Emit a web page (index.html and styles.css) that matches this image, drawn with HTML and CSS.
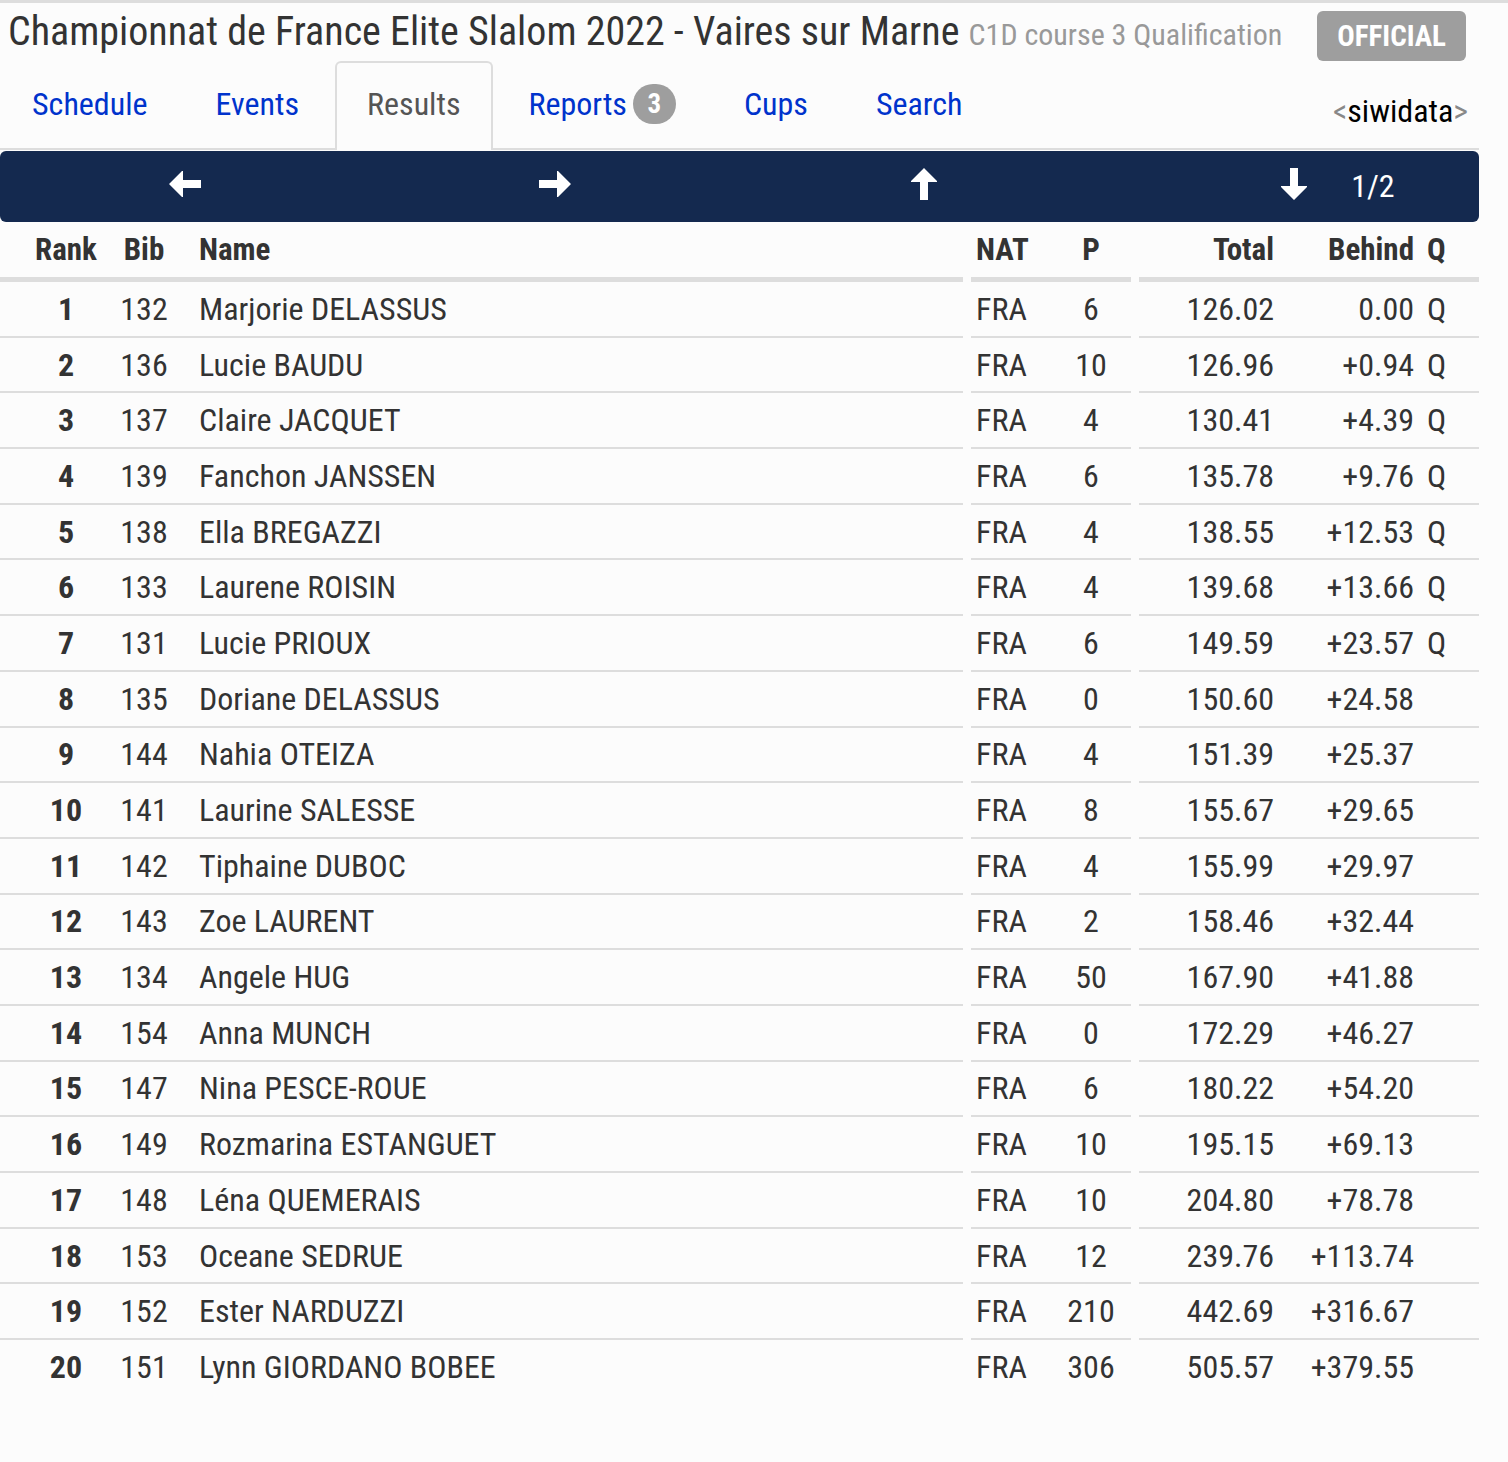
FILE: index.html
```html
<!DOCTYPE html>
<html lang="fr">
<head>
<meta charset="utf-8">
<title>Championnat de France Elite Slalom 2022 - Vaires sur Marne</title>
<link rel="stylesheet" href="styles.css">
</head>
<body>
<div class="topline"></div>
<div class="page">
  <header class="title-bar">
    <h1 class="title">Championnat de France Elite Slalom 2022 - Vaires sur Marne <small class="subtitle">C1D course 3 Qualification</small></h1>
    <span class="official">OFFICIAL</span>
  </header>

  <nav class="tabs">
    <a class="tab" href="#">Schedule</a>
    <a class="tab" href="#">Events</a>
    <a class="tab active" href="#">Results</a>
    <a class="tab" href="#">Reports <span class="count">3</span></a>
    <a class="tab" href="#">Cups</a>
    <a class="tab" href="#">Search</a>
    <span class="brand"><span class="bracket">&lt;</span>siwidata<span class="bracket">&gt;</span></span>
  </nav>

  <div class="pager">
    <span class="pager-cell"><svg class="arrow" width="32" height="26" viewBox="0 0 32 26"><polygon points="0,13 13,0 14,0 14,9 32,9 32,17 14,17 14,26 13,26" fill="#fff"/></svg></span>
    <span class="pager-cell"><svg class="arrow" width="32" height="26" viewBox="0 0 32 26"><polygon points="32,13 19,0 18,0 18,9 0,9 0,17 18,17 18,26 19,26" fill="#fff"/></svg></span>
    <span class="pager-cell"><svg class="arrow" width="26" height="32" viewBox="0 0 26 32"><polygon points="13,0 0,13 0,14 9,14 9,32 17,32 17,14 26,14 26,13" fill="#fff"/></svg></span>
    <span class="pager-cell"><svg class="arrow" width="26" height="32" viewBox="0 0 26 32"><polygon points="13,32 0,19 0,18 9,18 9,0 17,0 17,18 26,18 26,19" fill="#fff"/></svg><span class="page-no">1/2</span></span>
  </div>

  <div class="results">
    <div class="row head">
      <div class="grp g1"><span class="c-rank">Rank</span><span class="c-bib">Bib</span><span class="c-name">Name</span></div>
      <div class="grp g2"><span class="c-nat">NAT</span><span class="c-p">P</span></div>
      <div class="grp g3"><span class="c-total">Total</span><span class="c-behind">Behind</span><span class="c-q">Q</span></div>
    </div>
    <div class="row"><div class="grp g1"><span class="c-rank">1</span><span class="c-bib">132</span><span class="c-name">Marjorie DELASSUS</span></div><div class="grp g2"><span class="c-nat">FRA</span><span class="c-p">6</span></div><div class="grp g3"><span class="c-total">126.02</span><span class="c-behind">0.00</span><span class="c-q">Q</span></div></div>
    <div class="row"><div class="grp g1"><span class="c-rank">2</span><span class="c-bib">136</span><span class="c-name">Lucie BAUDU</span></div><div class="grp g2"><span class="c-nat">FRA</span><span class="c-p">10</span></div><div class="grp g3"><span class="c-total">126.96</span><span class="c-behind">+0.94</span><span class="c-q">Q</span></div></div>
    <div class="row"><div class="grp g1"><span class="c-rank">3</span><span class="c-bib">137</span><span class="c-name">Claire JACQUET</span></div><div class="grp g2"><span class="c-nat">FRA</span><span class="c-p">4</span></div><div class="grp g3"><span class="c-total">130.41</span><span class="c-behind">+4.39</span><span class="c-q">Q</span></div></div>
    <div class="row"><div class="grp g1"><span class="c-rank">4</span><span class="c-bib">139</span><span class="c-name">Fanchon JANSSEN</span></div><div class="grp g2"><span class="c-nat">FRA</span><span class="c-p">6</span></div><div class="grp g3"><span class="c-total">135.78</span><span class="c-behind">+9.76</span><span class="c-q">Q</span></div></div>
    <div class="row"><div class="grp g1"><span class="c-rank">5</span><span class="c-bib">138</span><span class="c-name">Ella BREGAZZI</span></div><div class="grp g2"><span class="c-nat">FRA</span><span class="c-p">4</span></div><div class="grp g3"><span class="c-total">138.55</span><span class="c-behind">+12.53</span><span class="c-q">Q</span></div></div>
    <div class="row"><div class="grp g1"><span class="c-rank">6</span><span class="c-bib">133</span><span class="c-name">Laurene ROISIN</span></div><div class="grp g2"><span class="c-nat">FRA</span><span class="c-p">4</span></div><div class="grp g3"><span class="c-total">139.68</span><span class="c-behind">+13.66</span><span class="c-q">Q</span></div></div>
    <div class="row"><div class="grp g1"><span class="c-rank">7</span><span class="c-bib">131</span><span class="c-name">Lucie PRIOUX</span></div><div class="grp g2"><span class="c-nat">FRA</span><span class="c-p">6</span></div><div class="grp g3"><span class="c-total">149.59</span><span class="c-behind">+23.57</span><span class="c-q">Q</span></div></div>
    <div class="row"><div class="grp g1"><span class="c-rank">8</span><span class="c-bib">135</span><span class="c-name">Doriane DELASSUS</span></div><div class="grp g2"><span class="c-nat">FRA</span><span class="c-p">0</span></div><div class="grp g3"><span class="c-total">150.60</span><span class="c-behind">+24.58</span><span class="c-q"></span></div></div>
    <div class="row"><div class="grp g1"><span class="c-rank">9</span><span class="c-bib">144</span><span class="c-name">Nahia OTEIZA</span></div><div class="grp g2"><span class="c-nat">FRA</span><span class="c-p">4</span></div><div class="grp g3"><span class="c-total">151.39</span><span class="c-behind">+25.37</span><span class="c-q"></span></div></div>
    <div class="row"><div class="grp g1"><span class="c-rank">10</span><span class="c-bib">141</span><span class="c-name">Laurine SALESSE</span></div><div class="grp g2"><span class="c-nat">FRA</span><span class="c-p">8</span></div><div class="grp g3"><span class="c-total">155.67</span><span class="c-behind">+29.65</span><span class="c-q"></span></div></div>
    <div class="row"><div class="grp g1"><span class="c-rank">11</span><span class="c-bib">142</span><span class="c-name">Tiphaine DUBOC</span></div><div class="grp g2"><span class="c-nat">FRA</span><span class="c-p">4</span></div><div class="grp g3"><span class="c-total">155.99</span><span class="c-behind">+29.97</span><span class="c-q"></span></div></div>
    <div class="row"><div class="grp g1"><span class="c-rank">12</span><span class="c-bib">143</span><span class="c-name">Zoe LAURENT</span></div><div class="grp g2"><span class="c-nat">FRA</span><span class="c-p">2</span></div><div class="grp g3"><span class="c-total">158.46</span><span class="c-behind">+32.44</span><span class="c-q"></span></div></div>
    <div class="row"><div class="grp g1"><span class="c-rank">13</span><span class="c-bib">134</span><span class="c-name">Angele HUG</span></div><div class="grp g2"><span class="c-nat">FRA</span><span class="c-p">50</span></div><div class="grp g3"><span class="c-total">167.90</span><span class="c-behind">+41.88</span><span class="c-q"></span></div></div>
    <div class="row"><div class="grp g1"><span class="c-rank">14</span><span class="c-bib">154</span><span class="c-name">Anna MUNCH</span></div><div class="grp g2"><span class="c-nat">FRA</span><span class="c-p">0</span></div><div class="grp g3"><span class="c-total">172.29</span><span class="c-behind">+46.27</span><span class="c-q"></span></div></div>
    <div class="row"><div class="grp g1"><span class="c-rank">15</span><span class="c-bib">147</span><span class="c-name">Nina PESCE-ROUE</span></div><div class="grp g2"><span class="c-nat">FRA</span><span class="c-p">6</span></div><div class="grp g3"><span class="c-total">180.22</span><span class="c-behind">+54.20</span><span class="c-q"></span></div></div>
    <div class="row"><div class="grp g1"><span class="c-rank">16</span><span class="c-bib">149</span><span class="c-name">Rozmarina ESTANGUET</span></div><div class="grp g2"><span class="c-nat">FRA</span><span class="c-p">10</span></div><div class="grp g3"><span class="c-total">195.15</span><span class="c-behind">+69.13</span><span class="c-q"></span></div></div>
    <div class="row"><div class="grp g1"><span class="c-rank">17</span><span class="c-bib">148</span><span class="c-name">Léna QUEMERAIS</span></div><div class="grp g2"><span class="c-nat">FRA</span><span class="c-p">10</span></div><div class="grp g3"><span class="c-total">204.80</span><span class="c-behind">+78.78</span><span class="c-q"></span></div></div>
    <div class="row"><div class="grp g1"><span class="c-rank">18</span><span class="c-bib">153</span><span class="c-name">Oceane SEDRUE</span></div><div class="grp g2"><span class="c-nat">FRA</span><span class="c-p">12</span></div><div class="grp g3"><span class="c-total">239.76</span><span class="c-behind">+113.74</span><span class="c-q"></span></div></div>
    <div class="row"><div class="grp g1"><span class="c-rank">19</span><span class="c-bib">152</span><span class="c-name">Ester NARDUZZI</span></div><div class="grp g2"><span class="c-nat">FRA</span><span class="c-p">210</span></div><div class="grp g3"><span class="c-total">442.69</span><span class="c-behind">+316.67</span><span class="c-q"></span></div></div>
    <div class="row last"><div class="grp g1"><span class="c-rank">20</span><span class="c-bib">151</span><span class="c-name">Lynn GIORDANO BOBEE</span></div><div class="grp g2"><span class="c-nat">FRA</span><span class="c-p">306</span></div><div class="grp g3"><span class="c-total">505.57</span><span class="c-behind">+379.55</span><span class="c-q"></span></div></div>
  </div>
</div>
</body>
</html>
```

FILE: styles.css
```css
html, body {
  margin: 0;
  padding: 0;
  background: #fcfcfc;
}
body {
  font-family: "Roboto Condensed", Roboto, "Liberation Sans", sans-serif;
  font-stretch: 75%;
  color: #333;
}
.topline {
  height: 3px;
  background: #dddddd;
}
.page {
  width: 1479px;
}
.title-bar {
  display: flex;
  align-items: flex-start;
  height: 58px;
  padding: 0 13px 0 8px;
}
.title {
  margin: 0;
  font-weight: 400;
  font-size: 40px;
  line-height: 58px;
  white-space: nowrap;
}
.subtitle {
  font-size: 30px;
  color: #999;
}
.official {
  margin-left: auto;
  margin-top: 8px;
  height: 50px;
  padding: 0 20px;
  border-radius: 6px;
  background: #9e9e9e;
  color: #fff;
  font-weight: 700;
  font-size: 29px;
  line-height: 50px;
}
.tabs {
  display: flex;
  align-items: flex-end;
  border-bottom: 2px solid #dddddd;
  height: 87px;
}
.tab {
  display: flex;
  align-items: center;
  padding: 21px 30px 26px;
  margin-right: 4px;
  line-height: 40px;
  font-size: 32px;
  color: #0033cc;
  text-decoration: none;
  border: 2px solid transparent;
  border-bottom: 0;
  border-radius: 6px 6px 0 0;
  margin-bottom: -2px;
  background: transparent;
}
.tab.active {
  color: #555;
  border-color: #dddddd;
  background: #fcfcfc;
}
.count {
  display: inline-block;
  margin-left: 6px;
  width: 43px;
  height: 40px;
  border-radius: 20px;
  background: #9e9e9e;
  color: #fff;
  font-weight: 700;
  font-size: 27px;
  line-height: 40px;
  text-align: center;
}
.brand {
  margin-left: auto;
  margin-right: 11px;
  align-self: center;
  margin-top: 12px;
  font-size: 32px;
  color: #000;
}
.bracket {
  color: #888;
}
.pager {
  display: grid;
  grid-template-columns: repeat(4, 1fr);
  align-items: center;
  height: 71px;
  margin-top: 1px;
  background: #14294f;
  border-radius: 6px;
  color: #fff;
}
.pager-cell {
  position: relative;
  display: flex;
  justify-content: center;
  align-items: center;
  margin-top: -5px;
}
.arrow {
  display: block;
}
.page-no {
  position: absolute;
  left: calc(50% + 57px);
  top: -2px;
  font-size: 32px;
  line-height: 40px;
}
.results {
  font-size: 32px;
}
.row {
  display: flex;
  gap: 8px;
  height: 55.7px;
}
.grp {
  display: flex;
  align-items: center;
  border-bottom: 2px solid #dddddd;
}
.row.last .grp {
  border-bottom-color: transparent;
}
.row.head {
  height: 60px;
  font-weight: 700;
  font-size: 31px;
}
.row.head .grp {
  border-bottom-width: 5px;
  padding-top: 0;
}
.g1 { width: 963px; }
.g2 { width: 160px; }
.g3 { width: 340px; }
.c-rank {
  width: 92px;
  padding-left: 20px;
  text-align: center;
  font-weight: 700;
}
.c-bib {
  width: 64px;
  text-align: center;
}
.c-name {
  padding-left: 23px;
  white-space: nowrap;
}
.c-nat {
  width: 76px;
  padding-left: 5px;
}
.c-p {
  width: 78px;
  text-align: center;
}
.c-total {
  width: 135px;
  padding-right: 10px;
  text-align: right;
}
.c-behind {
  width: 130px;
  padding-right: 10px;
  text-align: right;
}
.c-q {
  padding-left: 3px;
}
```
